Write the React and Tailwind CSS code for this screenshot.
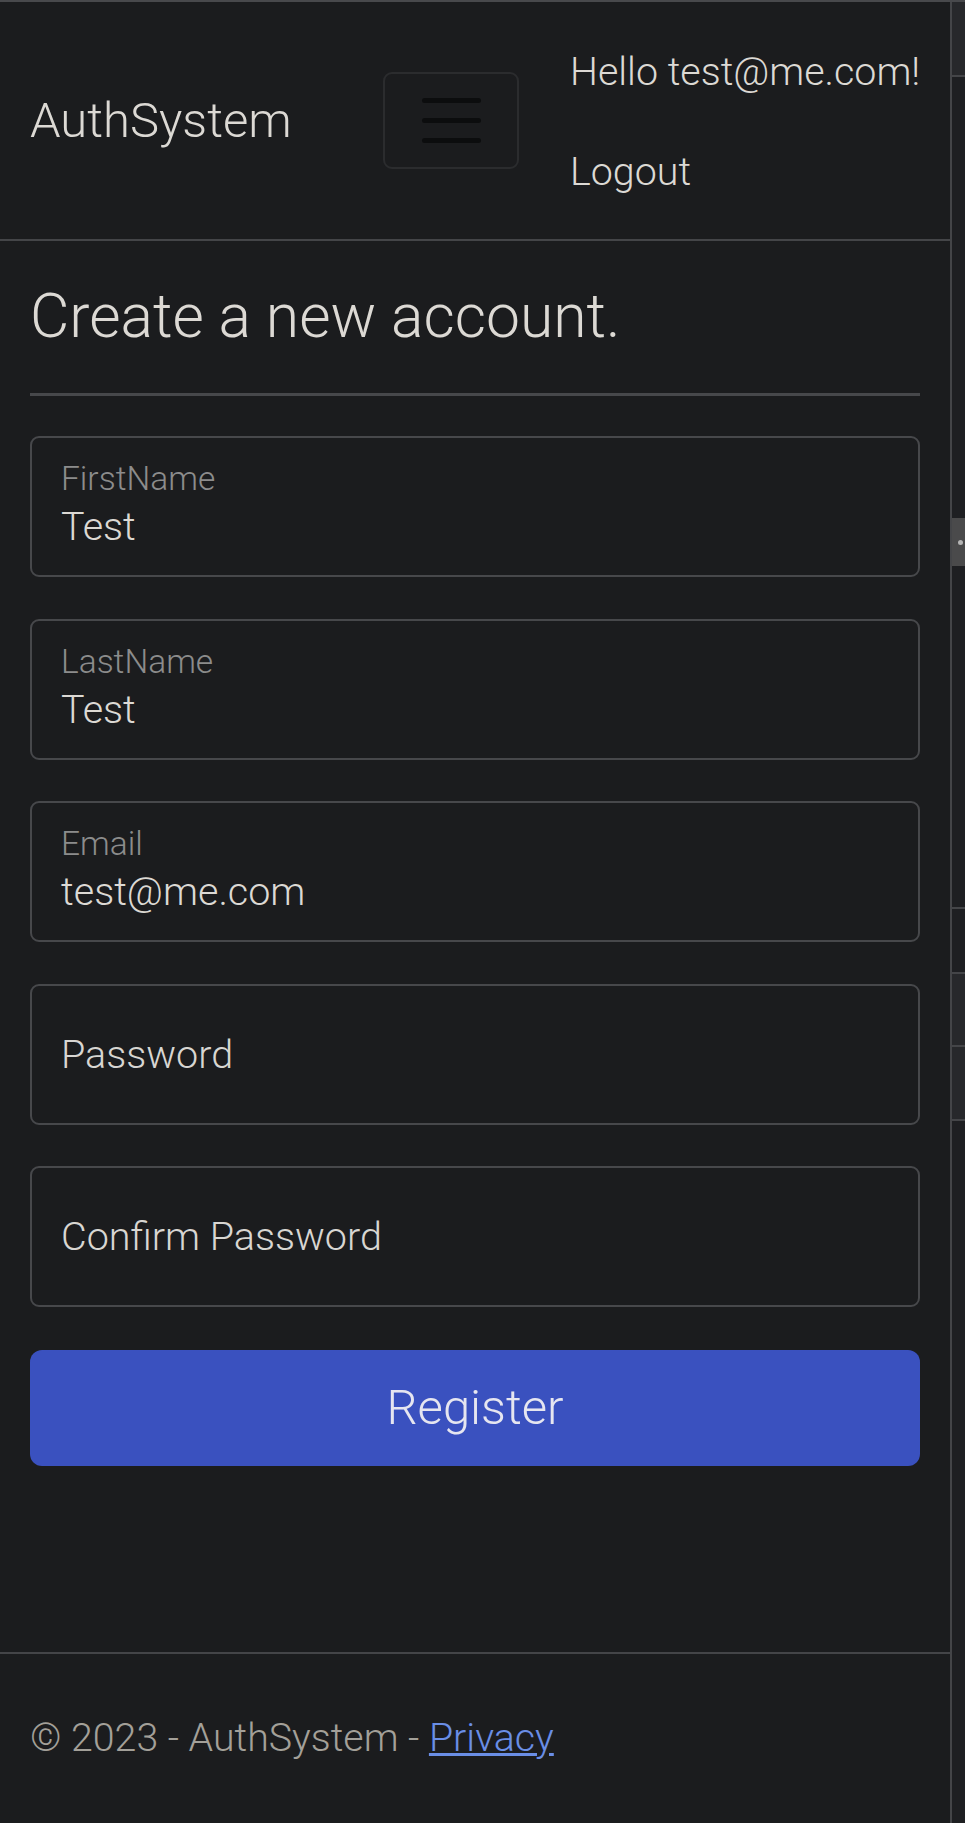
import React from "react";

const fields = [
  { label: "FirstName", value: "Test" },
  { label: "LastName", value: "Test" },
  { label: "Email", value: "test@me.com" },
  { placeholder: "Password" },
  { placeholder: "Confirm Password" },
];

function Field({ label, value, placeholder }) {
  if (placeholder) {
    return (
      <div className="h-[141px] rounded-[9px] border-2 border-[#47484b] flex items-center pl-[29px]">
        <span className="text-[39.5px] leading-[39px] text-[#d8d6d2]">{placeholder}</span>
      </div>
    );
  }
  return (
    <div className="h-[141px] rounded-[9px] border-2 border-[#47484b] flex flex-col pl-[29px] pt-[25px]">
      <span className="text-[33.5px] leading-[32px] text-[#8c8c8c]">{label}</span>
      <span className="mt-[12px] text-[39.5px] leading-[39px] text-[#dcd9d4]">{value}</span>
    </div>
  );
}

function SideStrip() {
  return (
    <div className="w-[13px] flex flex-col bg-[#1e1f22]">
      <div className="h-[75px] bg-[#27282b] border-b-2 border-[#444548]" />
      <div className="h-[441px]" />
      <div className="h-[48px] bg-[#4a4a4b] flex items-center justify-center">
        <div className="w-[5px] h-[5px] rounded-full bg-[#b5b5b5] ml-[4px]" />
      </div>
      <div className="h-[343px] border-b-2 border-[#444548]" />
      <div className="h-[65px] border-b-2 border-[#444548]" />
      <div className="h-[73px] bg-[#27282b] border-b-2 border-[#444548]" />
      <div className="h-[74px] bg-[#27282b] border-b-2 border-[#444548]" />
      <div className="flex-1" />
    </div>
  );
}

export default function App() {
  return (
    <div
      className="w-[965px] h-[1823px] bg-[#1b1c1e] border-t-2 border-[#48494c] flex font-light"
      style={{ fontFamily: "Roboto, 'Noto Sans', sans-serif" }}
    >
      <div className="w-[952px] border-r-2 border-[#444548] flex flex-col">
        {/* Navbar */}
        <header className="h-[239px] border-b-2 border-[#444548] flex items-center pl-[30px]">
          <div className="w-[353px] text-[49px] leading-[49px] text-[#dcd9d4]">AuthSystem</div>
          <button className="w-[136px] h-[97px] rounded-[9px] border-2 border-[#2b2c2e] flex flex-col items-center justify-center gap-[15px]">
            <span className="block w-[59px] h-[5px] rounded-full bg-[#0c0d0e]" />
            <span className="block w-[59px] h-[5px] rounded-full bg-[#0c0d0e]" />
            <span className="block w-[59px] h-[5px] rounded-full bg-[#0c0d0e]" />
          </button>
          <nav className="ml-[51px] self-start pt-[20px] flex flex-col text-[39.4px] text-[#dcd9d4]">
            <a className="h-[100px] leading-[100px]">Hello test@me.com!</a>
            <a className="h-[100px] leading-[100px]">Logout</a>
          </nav>
        </header>

        {/* Main */}
        <main className="flex-1 px-[30px] pt-[40px]">
          <h1 className="text-[60.6px] leading-[72px] text-[#dcd9d4]">Create a new account.</h1>
          <hr className="mt-[40px] border-0 h-[3px] bg-[#47484b]" />
          <form className="mt-[40px] flex flex-col gap-[41.5px]">
            {fields.map((f, i) => (
              <Field key={i} {...f} />
            ))}
            <button
              type="button"
              className="mt-[1px] h-[116px] rounded-[12px] bg-[#3a51bf] text-[49px] leading-[49px] text-[#e6e6f0]"
            >
              Register
            </button>
          </form>
        </main>

        {/* Footer */}
        <footer className="h-[171px] border-t-2 border-[#444548] flex items-center pl-[30px] text-[39.3px] leading-[39px] text-[#a3a099]">
          <span>
            © 2023 - AuthSystem -{" "}
            <a className="text-[#6a8ee6] underline">Privacy</a>
          </span>
        </footer>
      </div>
      <SideStrip />
    </div>
  );
}
